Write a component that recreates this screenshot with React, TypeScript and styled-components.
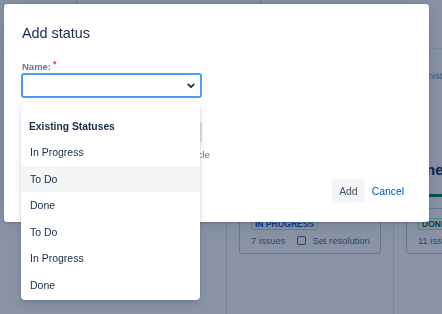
import styled, { createGlobalStyle } from "styled-components";

const GlobalStyle = createGlobalStyle`
  * { box-sizing: border-box; }
  html, body { margin: 0; padding: 0; }
  body {
    width: 442px;
    height: 314px;
    overflow: hidden;
    background: #ffffff;
    font-family: "Liberation Sans", Arial, sans-serif;
    color: #172b4d;
  }
`;

type Tone = "blue" | "green";

const columns: { title: string; status: string; count: number; tone: Tone }[] = [
  { title: "In Progress", status: "In Progress", count: 7, tone: "blue" },
  { title: "Done", status: "Done", count: 11, tone: "green" },
];

const options = ["In Progress", "To Do", "Done", "To Do", "In Progress", "Done"];

function Chevron() {
  return (
    <svg width="8" height="6" viewBox="0 0 8 6">
      <path d="M1.2 1.4 4 4.2 6.8 1.4" fill="none" stroke="#172b4d" strokeWidth="1.7" strokeLinecap="round" strokeLinejoin="round" />
    </svg>
  );
}

export default function App() {
  return (
    <>
      <GlobalStyle />
      <Page>
        <TopNav>
          <NavCell $width={76} />
          <NavCell $width={184} $divider />
          <NavCell $divider />
        </TopNav>
        <Main>
          <Sidebar />
          {columns.map((col) => (
            <Column key={col.title}>
              <Crumb>Administration</Crumb>
              <ColumnTitle>{col.title}</ColumnTitle>
              <ColumnBar $tone={col.tone} />
              <Card>
                <Lozenge $tone={col.tone}>{col.status}</Lozenge>
                <CardRow>
                  <span>{col.count} issues</span>
                  <Checkbox />
                  <span>Set resolution</span>
                </CardRow>
              </Card>
            </Column>
          ))}
        </Main>
      </Page>

      <Blanket>
        <Dialog>
          <Title>Add status</Title>
          <Label>
            Name:<Required>*</Required>
          </Label>
          <SelectWrap>
            <Select>
              <Chevron />
            </Select>
            <Menu>
              <MenuHeading>Existing Statuses</MenuHeading>
              {options.map((opt, i) => (
                <MenuItem key={i} $hover={i === 1}>
                  {opt}
                </MenuItem>
              ))}
            </Menu>
          </SelectWrap>
          <Label $muted>Description:</Label>
          <TextInput />
          <Helper>Statuses show where a card is in a lifecycle</Helper>
          <Footer>
            <Button $appearance="default">Add</Button>
            <Button $appearance="link">Cancel</Button>
          </Footer>
        </Dialog>
      </Blanket>
    </>
  );
}

const Page = styled.div`
  width: 442px;
  height: 314px;
  display: flex;
  flex-direction: column;
  background: #ffffff;
`;

const TopNav = styled.div`
  height: 49px;
  display: flex;
  border-bottom: 1px solid #ebecf0;
`;

const NavCell = styled.div<{ $width?: number; $divider?: boolean }>`
  ${(p) => (p.$width ? `width: ${p.$width}px;` : "flex: 1;")}
  ${(p) => (p.$divider ? "border-left: 1px solid #c1c7d0;" : "")}
`;

const Main = styled.div`
  flex: 1;
  display: flex;
`;

const Sidebar = styled.div`
  width: 226px;
  flex-shrink: 0;
`;

const Column = styled.div`
  width: 167px;
  flex-shrink: 0;
  border-left: 1px solid #dfe1e6;
  padding: 21px 13px 0 12px;
  display: flex;
  flex-direction: column;
`;

const Crumb = styled.div`
  font-size: 9.5px;
  line-height: 12px;
  color: #8993a4;
  white-space: nowrap;
`;

const ColumnTitle = styled.div`
  margin-top: 78px;
  font-size: 15px;
  line-height: 20px;
  font-weight: 700;
  color: #172b4d;
  white-space: nowrap;
`;

const ColumnBar = styled.div<{ $tone: Tone }>`
  margin-top: 14px;
  height: 3px;
  background: ${(p) => (p.$tone === "green" ? "#00875a" : "#0065ff")};
`;

const Card = styled.div`
  margin-top: 11px;
  width: 142px;
  flex-shrink: 0;
  display: flex;
  flex-direction: column;
  align-items: flex-start;
  border: 1px solid #c1c7d0;
  border-radius: 3px;
  padding: 9px 11px 5px;
  background: #ffffff;
`;

const Lozenge = styled.span<{ $tone: Tone }>`
  display: block;
  font-size: 8.5px;
  line-height: 10px;
  font-weight: 700;
  text-transform: uppercase;
  padding: 0 3px;
  border-radius: 3px;
  border: 1px solid ${(p) => (p.$tone === "green" ? "#79f2c0" : "#b3d4ff")};
  color: ${(p) => (p.$tone === "green" ? "#006644" : "#0052cc")};
  white-space: nowrap;
`;

const CardRow = styled.div`
  margin-top: 2px;
  height: 16px;
  display: flex;
  align-items: center;
  font-size: 9.4px;
  color: #5e6c84;
  white-space: nowrap;
`;

const Checkbox = styled.span`
  width: 9px;
  height: 9px;
  margin: 0 6px 0 12px;
  border: 1px solid #5e6c84;
  border-radius: 2px;
  flex-shrink: 0;
`;

const Blanket = styled.div`
  position: fixed;
  inset: 0;
  background: rgba(9, 30, 66, 0.48);
  padding: 4px 0 0 4px;
`;

const Dialog = styled.div`
  width: 425px;
  height: 218px;
  background: #ffffff;
  border-radius: 3px;
  box-shadow: 0 0 0 1px rgba(9, 30, 66, 0.08), 0 2px 1px rgba(9, 30, 66, 0.08),
    0 0 20px -6px rgba(9, 30, 66, 0.31);
  padding: 19px 20px 19px 17px;
  display: flex;
  flex-direction: column;
`;

const Title = styled.h1`
  margin: 0 0 0 1px;
  font-size: 14.4px;
  line-height: 20px;
  font-weight: 400;
  color: #172b4d;
`;

const Label = styled.label<{ $muted?: boolean }>`
  display: block;
  height: 11px;
  margin: ${(p) => (p.$muted ? "10px" : "18px")} 0 1px 1px;
  font-size: 9.5px;
  line-height: 11px;
  font-weight: 700;
  color: #6b778c;
  white-space: nowrap;
`;

const Required = styled.span`
  color: #de350b;
  font-size: 8.5px;
  margin-left: 2px;
  vertical-align: 3px;
  line-height: 0;
`;

const SelectWrap = styled.div`
  position: relative;
  width: 181px;
`;

const Select = styled.div`
  height: 25px;
  border: 2px solid #4c9aff;
  border-radius: 3px;
  background: #ffffff;
  display: flex;
  align-items: center;
  justify-content: flex-end;
  padding-right: 5px;
`;

const Menu = styled.div`
  position: absolute;
  top: calc(100% + 4px);
  left: 0;
  width: 179px;
  padding: 13px 0 2px;
  background: #ffffff;
  border-radius: 4px;
  box-shadow: 0 4px 8px -2px rgba(9, 30, 66, 0.25), 0 0 1px rgba(9, 30, 66, 0.31);
  z-index: 2;
`;

const MenuHeading = styled.div`
  height: 24px;
  line-height: 24px;
  padding-left: 8px;
  font-size: 10.3px;
  font-weight: 700;
  color: #172b4d;
`;

const MenuItem = styled.div<{ $hover?: boolean }>`
  height: 26.5px;
  line-height: 26.5px;
  padding-left: 9px;
  font-size: 10.5px;
  color: #172b4d;
  background: ${(p) => (p.$hover ? "#f4f5f7" : "transparent")};
`;

const TextInput = styled.div`
  margin-top: 2px;
  width: 181px;
  height: 21px;
  border: 2px solid #dfe1e6;
  border-radius: 3px;
  background: #fafbfc;
`;

const Helper = styled.p`
  margin: 6px 0 0 1px;
  font-size: 9.75px;
  line-height: 12px;
  color: #6b778c;
  white-space: nowrap;
`;

const Footer = styled.div`
  margin-top: auto;
  display: flex;
  justify-content: flex-end;
  gap: 2px;
`;

const Button = styled.button<{ $appearance: "default" | "link" }>`
  height: 24px;
  border: 0;
  border-radius: 3px;
  font-family: inherit;
  font-size: 10.4px;
  padding: 0 ${(p) => (p.$appearance === "link" ? 5 : 7)}px;
  background: ${(p) => (p.$appearance === "link" ? "transparent" : "#f4f5f7")};
  color: ${(p) => (p.$appearance === "link" ? "#0052cc" : "#42526e")};
  cursor: pointer;
`;
